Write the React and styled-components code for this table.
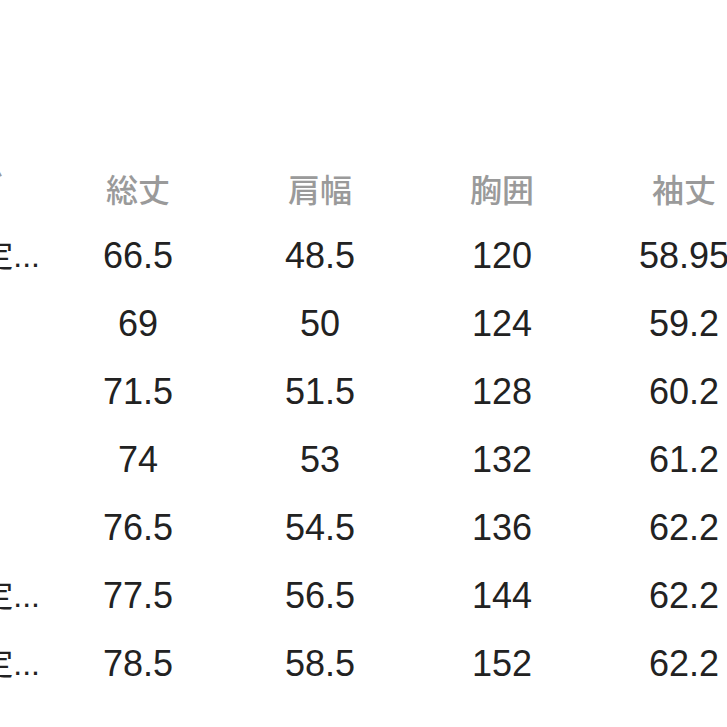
import React from 'react';
import styled, { createGlobalStyle } from 'styled-components';

const GlobalStyle = createGlobalStyle`
  html, body {
    margin: 0;
    padding: 0;
    background: #ffffff;
    overflow: hidden;
  }
  body {
    font-family: "Liberation Sans", "Noto Sans CJK JP", sans-serif;
  }
`;

const HEADERS = ['総丈', '肩幅', '胸囲', '袖丈'];

const ROWS = [
  { size: '3L(推定...', values: ['66.5', '48.5', '120', '58.95'] },
  { size: 'M', values: ['69', '50', '124', '59.2'] },
  { size: 'L', values: ['71.5', '51.5', '128', '60.2'] },
  { size: 'XL', values: ['74', '53', '132', '61.2'] },
  { size: '2XL', values: ['76.5', '54.5', '136', '62.2'] },
  { size: '4L(推定...', values: ['77.5', '56.5', '144', '62.2'] },
  { size: '5L(推定...', values: ['78.5', '58.5', '152', '62.2'] },
];

const App = () => {
  return (
    <>
      <GlobalStyle />
      <Page>
        <Table>
          <LabelCell>
            <HeadLabel>サイズ</HeadLabel>
          </LabelCell>
          {HEADERS.map(title => (
            <HeadCell key={title}>{title}</HeadCell>
          ))}
          {ROWS.map(row => (
            <React.Fragment key={row.size}>
              <LabelCell>
                <LabelText>{row.size}</LabelText>
              </LabelCell>
              {row.values.map((value, idx) => (
                <ValueCell key={idx}>{value}</ValueCell>
              ))}
            </React.Fragment>
          ))}
        </Table>
      </Page>
    </>
  );
};

export default App;

const Page = styled.div`
  width: 727px;
  height: 727px;
  overflow: hidden;
  background: #ffffff;
`;

const Table = styled.div`
  display: grid;
  grid-template-columns: 47px repeat(4, 182px);
  grid-auto-rows: 68px;
  padding-top: 154px;
`;

const Cell = styled.div`
  display: flex;
  align-items: center;
  justify-content: center;
  white-space: nowrap;
  line-height: 68px;
`;

const LabelCell = styled(Cell)`
  justify-content: flex-end;
`;

const LabelText = styled.span`
  flex-shrink: 0;
  width: 144px;
  text-align: left;
  font-size: 32px;
  color: #222222;
`;

const HeadLabel = styled(LabelText)`
  width: 139px;
  color: #9a9a9a;
  font-weight: 500;
`;

const HeadCell = styled(Cell)`
  font-family: "Noto Sans CJK JP", sans-serif;
  font-size: 32px;
  font-weight: 500;
  color: #9a9a9a;
`;

const ValueCell = styled(Cell)`
  font-size: 36px;
  color: #222222;
`;
